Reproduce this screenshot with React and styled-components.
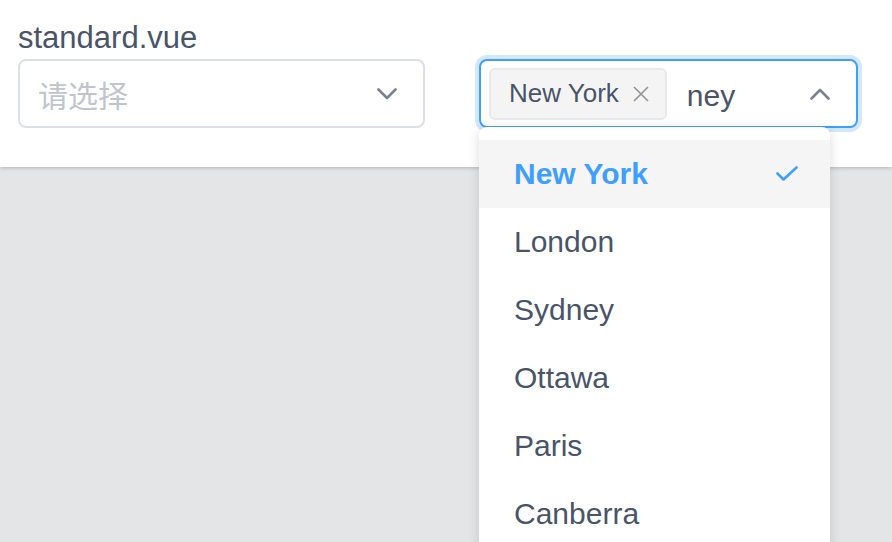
import React from "react";
import styled, { createGlobalStyle } from "styled-components";

const GlobalStyle = createGlobalStyle`
  html, body {
    margin: 0;
    padding: 0;
    height: 542px;
    overflow: hidden;
    background: #e4e5e7;
    font-family: "Liberation Sans", Arial, "Noto Sans CJK SC", sans-serif;
    color: #4a5468;
  }
  * { box-sizing: border-box; }
`;

const Header = styled.div`
  background: #fff;
  height: 167px;
  padding: 19px 18px 0;
  box-shadow: 0 1px 4px rgba(0, 0, 0, 0.22);
`;

const Label = styled.div`
  font-size: 31px;
  line-height: 37px;
  color: #4a5468;
`;

const Row = styled.div`
  display: flex;
  align-items: flex-start;
  gap: 54px;
  margin-top: 3px;
`;

const SelectBox = styled.div`
  position: relative;
  width: ${(p) => p.width}px;
  height: 69px;
  border: 2px solid ${(p) => (p.focused ? "#409eff" : "#dcdfe6")};
  border-radius: 8px;
  box-shadow: ${(p) => (p.focused ? "0 0 0 4px #d4e7fc" : "none")};
  display: flex;
  align-items: center;
  padding: 0 26px 0 ${(p) => (p.focused ? 8 : 18)}px;
  background: #fff;
`;

const Placeholder = styled.span`
  flex: 1;
  font-family: "Noto Sans CJK SC", sans-serif;
  font-size: 30px;
  color: #c0c4cc;
`;

const Tag = styled.span`
  display: inline-flex;
  align-items: center;
  gap: 14px;
  height: 52px;
  padding: 0 16px 0 18px;
  background: #f4f4f5;
  border: 2px solid #e9e9eb;
  border-radius: 6px;
  font-size: 26px;
  color: #4a5468;
`;

const Query = styled.span`
  flex: 1;
  margin-left: 20px;
  font-size: 30px;
  color: #4a5468;
  padding-top: 4px;
`;

const Dropdown = styled.div`
  position: absolute;
  top: calc(100% + 1px);
  left: -2px;
  width: 351px;
  height: 420px;
  padding: 13px 0 0;
  background: #fff;
  border-radius: 8px 8px 0 0;
  box-shadow: 0 2px 12px rgba(0, 0, 0, 0.14);
  z-index: 10;
`;

const Option = styled.div`
  height: 68px;
  display: flex;
  align-items: center;
  justify-content: space-between;
  padding: 0 32px 0 35px;
  font-size: 30px;
  font-weight: ${(p) => (p.selected ? 700 : 400)};
  color: ${(p) => (p.selected ? "#409eff" : "#4a5468")};
  background: ${(p) => (p.selected ? "#f5f5f5" : "#fff")};
`;

const Chevron = ({ up }) => (
  <svg width="20" height="12" viewBox="0 0 20 12">
    <polyline
      points={up ? "1.5,10.5 10,2 18.5,10.5" : "1.5,1.5 10,10 18.5,1.5"}
      fill="none"
      stroke="#7a8192"
      strokeWidth="2.6"
      strokeLinecap="round"
      strokeLinejoin="round"
    />
  </svg>
);

const CloseIcon = () => (
  <svg width="16" height="16" viewBox="0 0 16 16">
    <path d="M1 1L15 15M15 1L1 15" stroke="#909399" strokeWidth="1.6" />
  </svg>
);

const CheckIcon = () => (
  <svg width="22" height="16" viewBox="0 0 22 16">
    <polyline
      points="1.5,7.5 7.5,13.5 20.5,1.5"
      fill="none"
      stroke="#409eff"
      strokeWidth="2.6"
      strokeLinecap="round"
      strokeLinejoin="round"
    />
  </svg>
);

const cities = ["New York", "London", "Sydney", "Ottawa", "Paris", "Canberra"];

export default function App() {
  return (
    <>
      <GlobalStyle />
      <Header>
        <Label>standard.vue</Label>
        <Row>
          <SelectBox width={407}>
            <Placeholder>请选择</Placeholder>
            <Chevron />
          </SelectBox>
          <SelectBox width={379} focused>
            <Tag>
              New York
              <CloseIcon />
            </Tag>
            <Query>ney</Query>
            <Chevron up />
            <Dropdown>
              {cities.map((c, i) => (
                <Option key={c} selected={i === 0}>
                  {c}
                  {i === 0 && <CheckIcon />}
                </Option>
              ))}
            </Dropdown>
          </SelectBox>
        </Row>
      </Header>
    </>
  );
}
